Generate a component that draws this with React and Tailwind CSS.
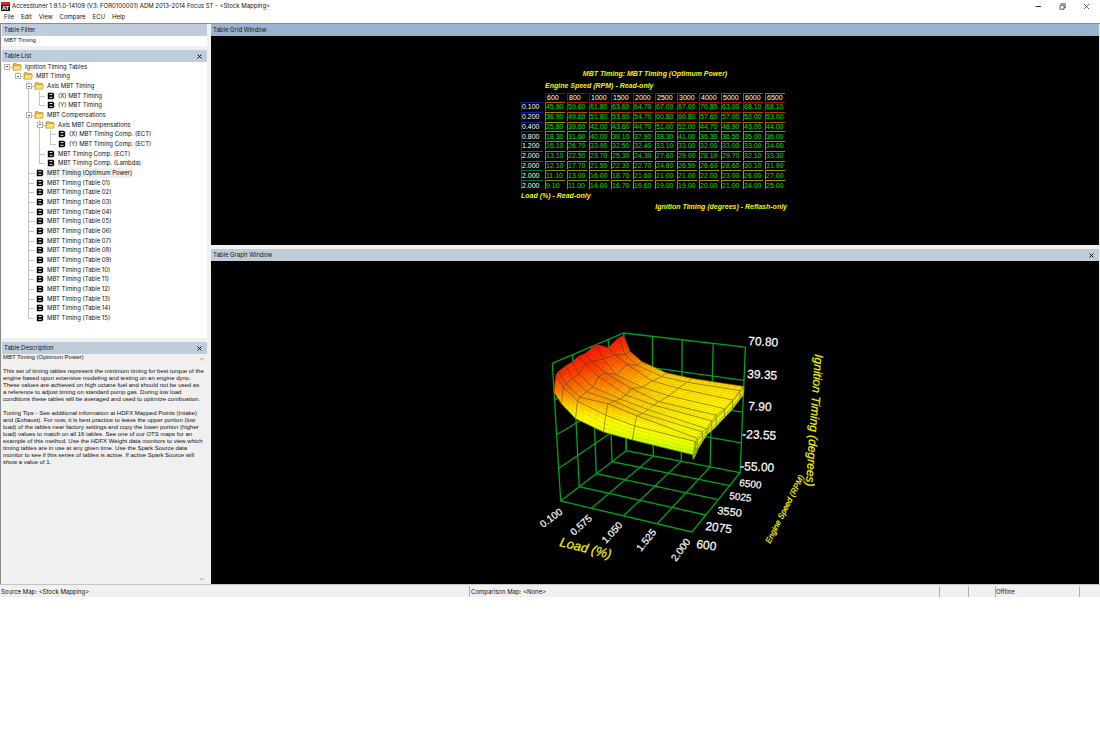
import { Fragment } from 'react'

const TREE = [
  {
    label: 'Ignition Timing Tables',
    children: [
      {
        label: 'MBT Timing',
        children: [
          { label: 'Axis MBT Timing', children: [{ label: '(X) MBT Timing' }, { label: '(Y) MBT Timing' }] },
          {
            label: 'MBT Compensations',
            children: [
              {
                label: 'Axis MBT Compensations',
                children: [{ label: '(X) MBT Timing Comp. (ECT)' }, { label: '(Y) MBT Timing Comp. (ECT)' }],
              },
              { label: 'MBT Timing Comp. (ECT)' },
              { label: 'MBT Timing Comp. (Lambda)' },
            ],
          },
          { label: 'MBT Timing (Optimum Power)', selected: true },
          ...Array.from({ length: 15 }, (_, i) => ({
            label: `MBT Timing (Table ${String(i + 1).padStart(2, '0')})`,
          })),
        ],
      },
    ],
  },
]

const RPM = [600, 800, 1000, 1500, 2000, 2500, 3000, 4000, 5000, 6000, 6500]
const LOAD = [0.1, 0.2, 0.4, 0.8, 1.2, 2, 2, 2, 2]
const TIMING = [
  [45.9, 59.6, 61.8, 63.6, 64.7, 67, 67, 70.8, 63, 68.1, 68.1],
  [36.9, 49.6, 51.8, 53.6, 54.7, 60.8, 60.8, 57.6, 57, 52, 53],
  [25.8, 39.6, 42, 43.6, 44.7, 51, 52, 44.7, 48.9, 43, 44],
  [18.3, 31.6, 40, 39.1, 37.9, 38.3, 41, 36.3, 36.5, 35, 36],
  [16.1, 26.7, 33.9, 32.5, 32.4, 33.1, 33, 32, 33, 33, 34],
  [13.1, 22.5, 23.7, 25.3, 24.3, 27.6, 29, 28.1, 29.7, 32.1, 33.3],
  [12.1, 17.7, 21.5, 22.3, 22.7, 24.8, 26.5, 26.6, 28.6, 30.1, 31.9],
  [11.1, 13, 16, 18.7, 21.6, 21, 21, 22, 23, 26, 27],
  [9.1, 11, 14, 16.7, 19.6, 19, 19, 20, 21, 24, 25],
]

// Flatten the tree; guides[k] says whether the branch at level k carries on below this row.
function flatten(nodes, guides = []) {
  return nodes.flatMap((node, i) => {
    const last = i === nodes.length - 1
    return [
      { ...node, guides, last, root: guides.length === 0 },
      ...(node.children ? flatten(node.children, [...guides, !last]) : []),
    ]
  })
}

function FolderIcon() {
  return (
    <svg viewBox="0 0 10 8" className="h-2 w-[10px] shrink-0">
      <path d="M1 7V1.3L1.8.6h2.4l.8.9h3.4v1" fill="#e9c04c" stroke="#a77d1c" strokeWidth=".6" />
      <path d="M1 7.2 1.8 2.6h7.5L8.8 7.2z" fill="#fbe07c" stroke="#b58a22" strokeWidth=".6" />
    </svg>
  )
}

function TableIcon() {
  return (
    <svg viewBox="0 0 8 8" className="ml-[2px] size-2 shrink-0">
      <path d="M.8.8h5.1l1.3 1.3v1.3l-.6.6.6.6v1.3L5.9 7.2H.8z" fill="#000" />
      <path d="M2.5 2.6h3M2.5 5.3h3" stroke="#fff" strokeWidth=".9" />
    </svg>
  )
}

function TreeRow({ row }) {
  return (
    <li className="flex items-stretch">
      {row.guides.map((on, i) => (
        <span key={i} className={`flex shrink-0 justify-center ${i === 0 ? 'w-[10px]' : 'w-[11px]'}`}>
          {on && <span className="w-px bg-[#c4c4c4]" />}
        </span>
      ))}
      <span className={`relative flex shrink-0 items-center justify-center ${row.root ? 'w-[10px]' : 'w-[11px]'}`}>
        {!row.root && <span className={`absolute top-0 left-[5px] w-px bg-[#c4c4c4] ${row.last ? 'h-1/2' : 'h-full'}`} />}
        <span className="absolute top-1/2 right-0 left-[5px] h-px bg-[#c4c4c4]" />
        {row.children && (
          <button aria-label={`Collapse ${row.label}`} className="relative flex size-[6px] items-center justify-center border border-[#b4b4b4] bg-white">
            <span className="h-px w-[2px] bg-[#555]" />
          </button>
        )}
      </span>
      <span className="flex w-[12px] shrink-0 items-center">{row.children ? <FolderIcon /> : <TableIcon />}</span>
      <button className={`px-px text-left ${row.selected ? 'bg-[#efefef]' : ''}`}>{row.label}</button>
    </li>
  )
}

function PanelHeader({ title, active, closable }) {
  return (
    <header className={`flex h-3 shrink-0 items-center justify-between pr-1 pl-[2px] ${active ? 'bg-[#99b4d1]' : 'bg-[#bfcddb]'}`}>
      <h2>{title}</h2>
      {closable && (
        <button aria-label={`Close ${title}`} className="p-px">
          <svg viewBox="0 0 6 6" className="size-[5px]">
            <path d="M.7.7l4.6 4.6M5.3.7.7 5.3" stroke="#000" strokeWidth="1.2" />
          </svg>
        </button>
      )}
    </header>
  )
}

function mix(stops, x) {
  if (x <= stops[0][0]) return `rgb(${stops[0][1].join(',')})`
  for (let i = 1; i < stops.length; i++) {
    const [x1, c1] = stops[i]
    const [x0, c0] = stops[i - 1]
    if (x <= x1) {
      const t = (x - x0) / (x1 - x0)
      return `rgb(${c0.map((c, k) => Math.round(c + (c1[k] - c) * t)).join(',')})`
    }
  }
  return `rgb(${stops[stops.length - 1][1].join(',')})`
}

const CELL_STOPS = [[9, [130, 140, 0]], [25, [165, 155, 0]], [36, [185, 120, 0]], [50, [190, 65, 0]], [62, [190, 10, 0]]]
const AXIS_STOPS = [[0, [20, 30, 170]], [0.4, [10, 65, 120]], [0.7, [0, 120, 60]], [1, [90, 140, 20]]]
const SURFACE_STOPS = [[9, [150, 255, 0]], [20, [235, 255, 0]], [28, [255, 248, 0]], [36, [255, 205, 0]], [46, [255, 130, 0]], [58, [255, 60, 0]], [69, [255, 20, 10]]]

function TimingTable() {
  return (
    <div className="w-[268px] font-['Liberation_Sans',sans-serif] text-[7px] leading-[8px] text-[#00e000]">
      <p className="text-center font-bold text-[#f4f400] italic">MBT Timing: MBT Timing (Optimum Power)</p>
      <p className="mt-1 pl-6 font-bold text-[#f4f400] italic">Engine Speed (RPM) - Read-only</p>
      <table className="mt-[2px] -ml-[2px] h-[98px] w-full table-fixed border-separate border-spacing-x-[2px] border-spacing-y-px leading-[7px]">
        <thead>
          <tr>
            <td className="w-[22px] p-0" />
            {RPM.map((rpm, i) => (
              <th
                key={rpm}
                scope="col"
                className="border-t border-l p-0 pl-px text-left font-normal text-white"
                style={{ borderColor: mix(AXIS_STOPS, i / 10) }}
              >
                {rpm}
              </th>
            ))}
          </tr>
        </thead>
        <tbody>
          {TIMING.map((row, r) => (
            <tr key={r}>
              <th
                scope="row"
                className="border-t border-l p-0 text-left font-normal text-white"
                style={{ borderColor: mix(AXIS_STOPS, (LOAD[r] / 2) * 0.7) }}
              >
                {LOAD[r].toFixed(3)}
              </th>
              {row.map((v, c) => (
                <td key={c} className="border-t border-l p-0" style={{ borderColor: mix(CELL_STOPS, v) }}>
                  {v.toFixed(2)}
                </td>
              ))}
            </tr>
          ))}
        </tbody>
      </table>
      <p className="mt-[2px] font-bold text-[#f4f400] italic">Load (%) - Read-only</p>
      <p className="mt-[3px] pr-[2px] text-right font-bold text-[#f4f400] italic">Ignition Timing (degrees) - Reflash-only</p>
    </div>
  )
}

// Perspective of the unit cube: u = load, v = rpm, h = timing.
function project(u, v, h) {
  const w = 1 - 0.082 * u + 0.189 * v - 0.074 * h
  const x = (560.7 + 74.6 * u + 184 * v - 49.3 * h) / w
  const y = (501 - 12.6 * u + 34.9 * v - 164.6 * h) / w
  return [x, y]
}

const toPoints = (pts) => pts.map((p) => p.map((n) => n.toFixed(1)).join(',')).join(' ')
const uOf = (load) => (load - 0.1) / 1.9
const vOf = (rpm) => (rpm - 600) / 5900
const hOf = (deg) => (deg + 55) / 125.8
const STEPS = 4

function gridLines() {
  const lines = []
  for (let i = 0; i <= 4; i++) {
    const t = i / 4
    lines.push([[t, 0, 0], [t, 1, 0], [t, 1, 1]])
    lines.push([[1, t, 0], [0, t, 0], [0, t, 1]])
    if (t > 0) lines.push([[0, 0, t], [0, 1, t], [1, 1, t]])
  }
  return lines.map((l) => toPoints(l.map((p) => project(...p))))
}

// Quads run from the far corner to the near one, so later ones cover earlier ones.
function surfaceQuads() {
  const quads = []
  for (let c = RPM.length - 2; c >= 0; c--) {
    for (let r = 0; r < LOAD.length - 1; r++) {
      const at = (s, t) => {
        const load = LOAD[r] + (LOAD[r + 1] - LOAD[r]) * s
        const rpm = RPM[c] + (RPM[c + 1] - RPM[c]) * t
        const near = TIMING[r][c] * (1 - s) + TIMING[r + 1][c] * s
        const far = TIMING[r][c + 1] * (1 - s) + TIMING[r + 1][c + 1] * s
        const deg = near * (1 - t) + far * t
        return { p: project(uOf(load), vOf(rpm), hOf(deg)), deg }
      }
      const cells = []
      for (let j = STEPS - 1; j >= 0; j--) {
        for (let i = 0; i < STEPS; i++) {
          const corners = [at(i / STEPS, j / STEPS), at((i + 1) / STEPS, j / STEPS), at((i + 1) / STEPS, (j + 1) / STEPS), at(i / STEPS, (j + 1) / STEPS)]
          const deg = corners.reduce((sum, k) => sum + k.deg, 0) / 4
          cells.push({ points: toPoints(corners.map((k) => k.p)), color: mix(SURFACE_STOPS, deg) })
        }
      }
      quads.push({ cells, outline: toPoints([at(0, 0), at(1, 0), at(1, 1), at(0, 1)].map((k) => k.p)) })
    }
  }
  return quads
}

const GRID = gridLines()
const QUADS = surfaceQuads()

// [text, x, y, size, angle]
const TICKS = [
  ['70.80', 748, 345, 12, 3],
  ['39.35', 747, 378, 12, 3],
  ['7.90', 748, 410, 12, 3],
  ['-23.55', 742, 438, 12, 3],
  ['-55.00', 740, 470, 12, 3],
  ['6500', 739, 486, 10, 7],
  ['5025', 729, 499, 10, 7],
  ['3550', 717, 514, 11, 7],
  ['2075', 705, 530, 12, 7],
  ['600', 696, 548, 12, 7],
  ['0.100', 543, 528, 10, -36],
  ['0.575', 574, 536, 10, -42],
  ['1.050', 606, 544, 10, -47],
  ['1.525', 641, 552, 10, -51],
  ['2.000', 676, 562, 10, -54],
]

const AXIS_TITLES = [
  ['Ignition Timing (degrees)', 815, 354, 12, 94],
  ['Engine Speed (RPM)', 770, 544, 8, -63],
  ['Load (%)', 559, 546, 13, 14],
]

function TimingGraph() {
  return (
    <svg viewBox="475 261 360 323" className="h-[323px] w-[360px]" role="img" aria-label="MBT Timing surface">
      <g fill="none" stroke="#00a31e" strokeWidth="1.3">
        {GRID.map((points, i) => (
          <polyline key={i} points={points} />
        ))}
      </g>
      {QUADS.map((quad, i) => (
        <Fragment key={i}>
          {quad.cells.map((cell, k) => (
            <polygon key={k} points={cell.points} fill={cell.color} stroke={cell.color} strokeWidth=".5" />
          ))}
          <polygon points={quad.outline} fill="none" stroke="#3a2c00" strokeOpacity=".75" strokeWidth=".5" />
        </Fragment>
      ))}
      <g className="font-['Liberation_Sans',sans-serif]" strokeWidth=".2">
        {TICKS.map(([text, x, y, size, angle]) => (
          <text key={text} fontSize={size} fill="#fff" stroke="#fff" transform={`translate(${x} ${y}) rotate(${angle})`}>
            {text}
          </text>
        ))}
        {AXIS_TITLES.map(([text, x, y, size, angle]) => (
          <text key={text} fontSize={size} fill="#f4f400" stroke="#f4f400" fontStyle="italic" transform={`translate(${x} ${y}) rotate(${angle})`}>
            {text}
          </text>
        ))}
      </g>
    </svg>
  )
}

function TitleBar() {
  return (
    <div className="flex h-3 items-center gap-[2px] pr-[10px] pl-px">
      <svg viewBox="0 0 9 9" className="size-[9px] shrink-0">
        <rect width="9" height="9" fill="#201010" />
        <rect width="9" height="3" fill="#d8232a" />
        <text x="4.5" y="7.6" textAnchor="middle" fontSize="6" fontWeight="bold" fill="#fff" fontFamily="Liberation Sans, sans-serif">AT</text>
      </svg>
      <h1>Accesstuner 1.9.1.0-14109 (V3: FOR0100001) ADM 2013-2014 Focus ST - &lt;Stock Mapping&gt;</h1>
      <div className="ml-auto flex gap-[17px]">
        <button aria-label="Minimize">
          <svg viewBox="0 0 7 7" className="size-[7px]"><path d="M.5 3.5h5.5" stroke="#333" /></svg>
        </button>
        <button aria-label="Restore">
          <svg viewBox="0 0 7 7" className="size-[7px]" fill="none" stroke="#333" strokeWidth=".8"><path d="M1 2.2h4v4H1zM2.2 2V.8h4v4H5" /></svg>
        </button>
        <button aria-label="Close">
          <svg viewBox="0 0 7 7" className="size-[7px]"><path d="m1 1 5 5M6 1 1 6" stroke="#333" strokeWidth=".8" /></svg>
        </button>
      </div>
    </div>
  )
}

function ScrollArrow({ label, d }) {
  return (
    <button aria-label={label}>
      <svg viewBox="0 0 6 6" className="size-[6px]"><path d={d} fill="none" stroke="#999" strokeWidth=".8" /></svg>
    </button>
  )
}

export default function App() {
  return (
    <div className="min-h-screen bg-white font-['Inter','Open_Sans',sans-serif] text-[6px] leading-[8px] text-[#111]">
      <TitleBar />
      <nav className="flex h-[11px] items-center gap-[7px] pb-px pl-1">
        {['File', 'Edit', 'View', 'Compare', 'ECU', 'Help'].map((item) => (
          <button key={item}>{item}</button>
        ))}
      </nav>
      <main className="flex gap-1 border-t border-l border-[#8c8c8c] bg-[#f0f0f0] pr-px">
        <aside className="flex w-[206px] shrink-0 flex-col gap-1 pl-px">
          <section className="bg-white">
            <PanelHeader title="Table Filter" />
            <input
              aria-label="Table Filter"
              defaultValue="MBT Timing"
              className="block h-[10px] w-full px-[2px] pb-[2px] font-['Liberation_Sans',sans-serif] outline-none"
            />
          </section>
          <section className="bg-white">
            <PanelHeader title="Table List" closable />
            <ul className="grid h-[261px] auto-rows-fr">
              {flatten(TREE).map((row) => (
                <TreeRow key={row.label} row={row} />
              ))}
            </ul>
            <div className="h-[15px]" />
          </section>
          <section className="flex grow flex-col">
            <PanelHeader title="Table Description" closable />
            <div className="flex grow justify-between">
              <div className="w-[195px] pl-px font-['Liberation_Sans',sans-serif] leading-[7px] whitespace-nowrap">
                <p>MBT Timing (Optimum Power)</p>
                <p className="mt-[7px]">
                  This set of timing tables represent the minimum timing for best torque of the<br />
                  engine based upon extensive modeling and testing on an engine dyno.<br />
                  These values are achieved on high octane fuel and should not be used as<br />
                  a reference to adjust timing on standard pump gas. During low load<br />
                  conditions these tables will be averaged and used to optimize combustion.
                </p>
                <p className="mt-[7px]">
                  Tuning Tips - See additional information at HDFX Mapped Points (Intake)<br />
                  and (Exhaust). For now, it is best practice to leave the upper portion (low<br />
                  load) of the tables near factory settings and copy the lower portion (higher<br />
                  load) values to match on all 16 tables. See one of our OTS maps for an<br />
                  example of this method. Use the HDFX Weight data monitors to view which<br />
                  timing tables are in use at any given time. Use the Spark Source data<br />
                  monitor to see if this series of tables is active. If active Spark Source will<br />
                  show a value of 1.
                </p>
              </div>
              <div className="flex w-[10px] flex-col items-center justify-between py-[2px]">
                <ScrollArrow label="Scroll up" d="M1 4.2 3 2l2 2.2" />
                <ScrollArrow label="Scroll down" d="M1 2l2 2.2L5 2" />
              </div>
            </div>
          </section>
        </aside>
        <div className="flex grow flex-col gap-1">
          <section>
            <PanelHeader title="Table Grid Window" active />
            <div className="flex justify-center bg-black py-[34px]">
              <TimingTable />
            </div>
          </section>
          <section>
            <PanelHeader title="Table Graph Window" closable />
            <div className="flex justify-center bg-black">
              <TimingGraph />
            </div>
          </section>
        </div>
      </main>
      <footer className="flex h-[13px] items-stretch border-t border-[#c4c4c4] bg-[#f0f0f0] pt-px leading-[11px]">
        <span className="flex-1 border-r border-[#b0b0b0] pl-px">Source Map: &lt;Stock Mapping&gt;</span>
        <span className="flex-1 border-r border-[#b0b0b0] pl-px">Comparison Map: &lt;None&gt;</span>
        <span className="w-[29px] border-r border-[#b0b0b0]" />
        <span className="w-[27px] border-r border-[#b0b0b0]" />
        <span className="w-[84px] border-r border-[#b0b0b0]">Offline</span>
        <span className="w-[20px]" />
      </footer>
    </div>
  )
}
